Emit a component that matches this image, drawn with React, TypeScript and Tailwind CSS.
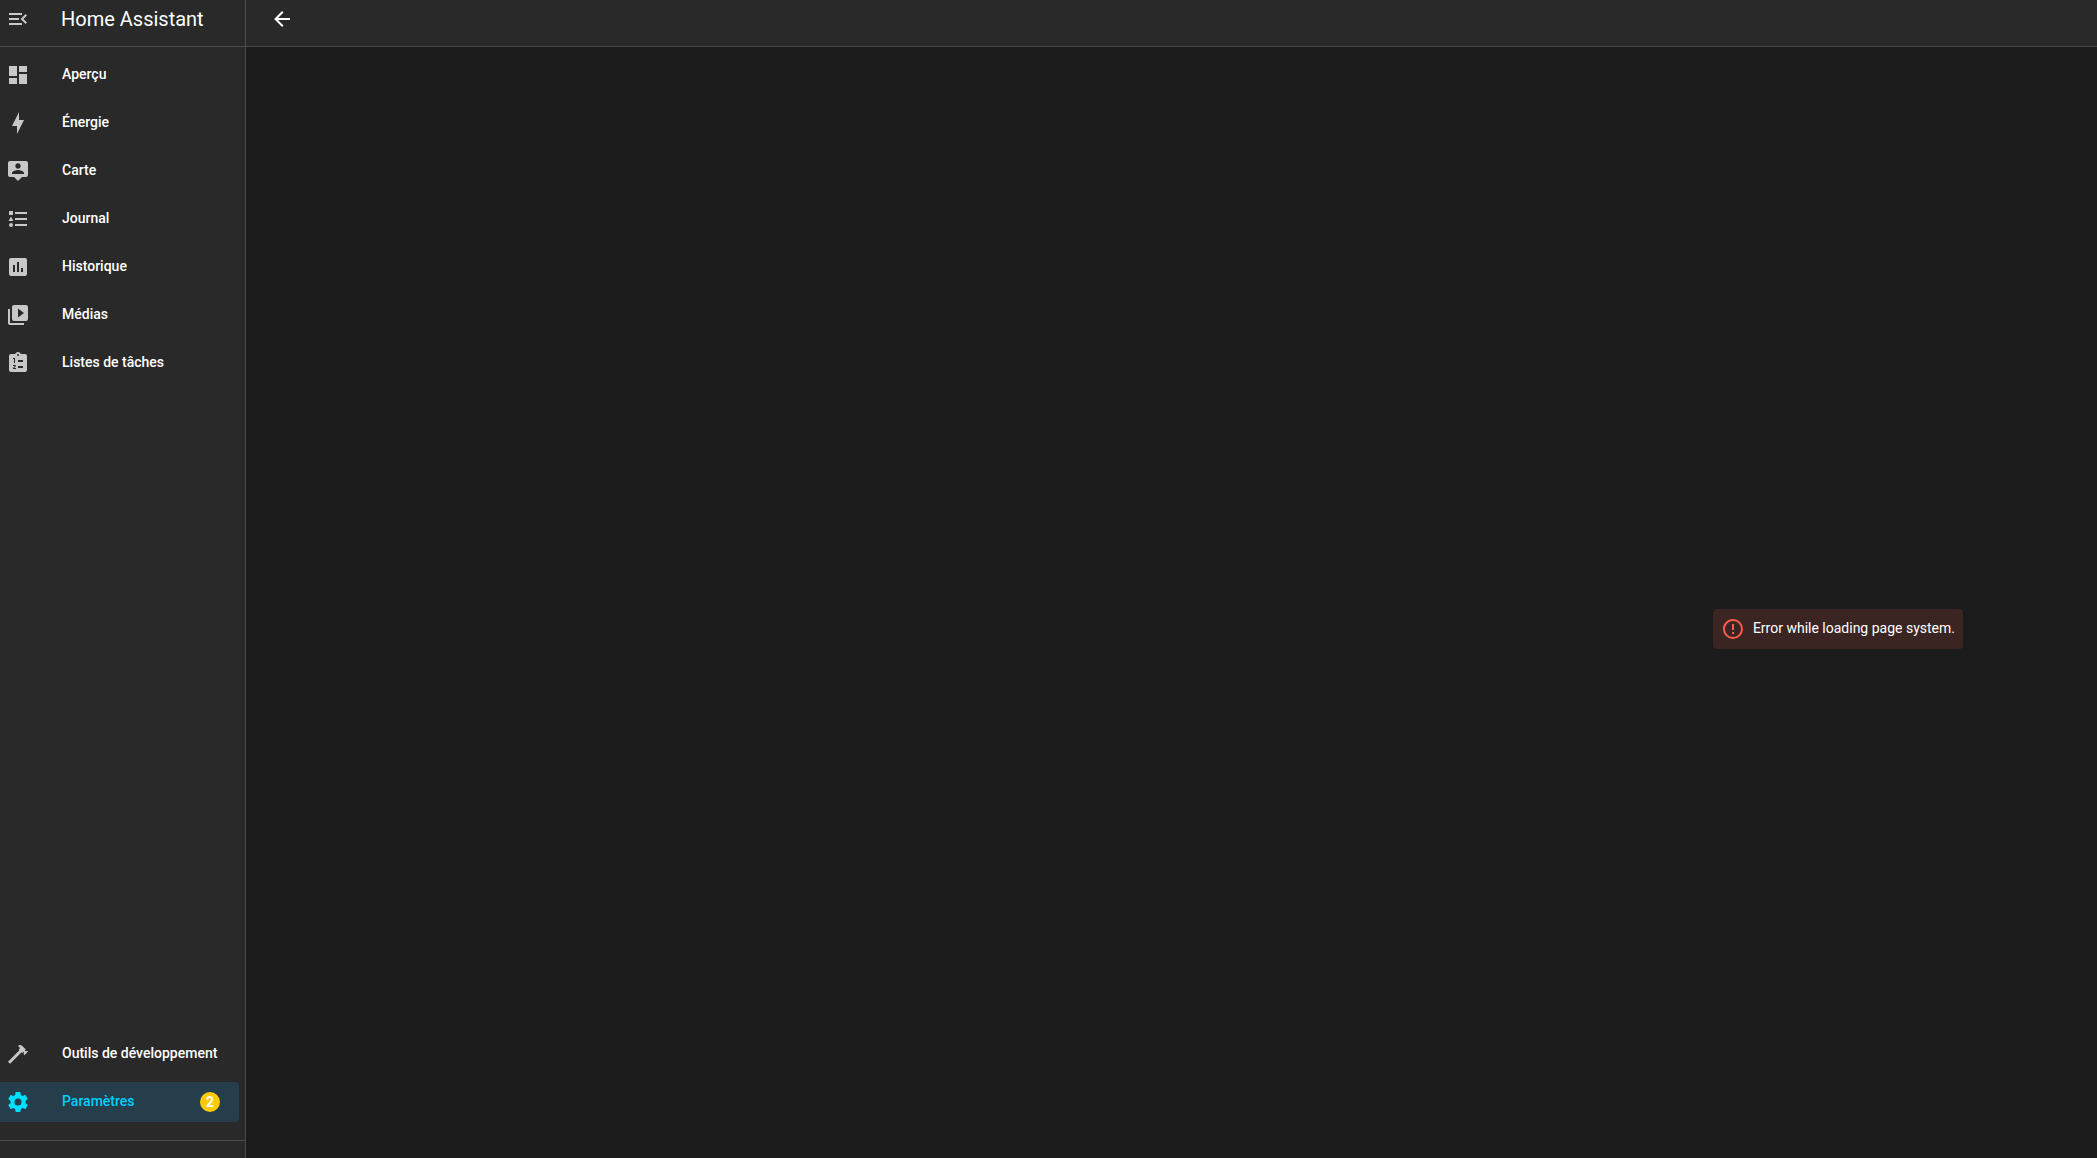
import React, { useState } from 'react';

// Material Design icon outlines, all on a 24 x 24 grid
const ICONS = {
  menuOpen: 'M21,15.61L19.59,17L14.58,12L19.59,7L21,8.39L17.44,12L21,15.61M3,6H16V8H3V6M3,13V11H13V13H3M3,18V16H16V18H3Z',
  arrowLeft: 'M20,11V13H8L13.5,18.5L12.08,19.92L4.16,12L12.08,4.08L13.5,5.5L8,11H20Z',
  dashboard: 'M13,3V9H21V3M13,21H21V11H13M3,21H11V15H3M3,13H11V3H3V13Z',
  lightning: 'M11 15H6L13 1V9H18L11 23V15Z',
  account: 'M20,2H4A2,2 0 0,0 2,4V16A2,2 0 0,0 4,18H8L12,22L16,18H20A2,2 0 0,0 22,16V4A2,2 0 0,0 20,2M12,4.3C13.5,4.3 14.7,5.5 14.7,7C14.7,8.5 13.5,9.7 12,9.7C10.5,9.7 9.3,8.5 9.3,7C9.3,5.5 10.5,4.3 12,4.3M18,15H6V14.1C6,12.1 10,11 12,11C14,11 18,12.1 18,14.1V15Z',
  list: 'M5,9.5L7.5,14H2.5L5,9.5M3,4H7V8H3V4M5,20A2,2 0 0,0 7,18A2,2 0 0,0 5,16A2,2 0 0,0 3,18A2,2 0 0,0 5,20M9,5V7H21V5H9M9,19H21V17H9V19M9,13H21V11H9V13Z',
  chart: 'M19,3H5A2,2 0 0,0 3,5V19A2,2 0 0,0 5,21H19A2,2 0 0,0 21,19V5A2,2 0 0,0 19,3M9,17H7V10H9V17M13,17H11V7H13V17M17,17H15V13H17V17Z',
  media: 'M4,6H2V20A2,2 0 0,0 4,22H18V20H4V6M20,2H8A2,2 0 0,0 6,4V16A2,2 0 0,0 8,18H20A2,2 0 0,0 22,16V4A2,2 0 0,0 20,2M12,14.5V5.5L18,10L12,14.5Z',
  clipboard: 'M19,3H14.82C14.4,1.84 13.3,1 12,1C10.7,1 9.6,1.84 9.18,3H5A2,2 0 0,0 3,5V19A2,2 0 0,0 5,21H19A2,2 0 0,0 21,19V5A2,2 0 0,0 19,3M12,3A1,1 0 0,1 13,4A1,1 0 0,1 12,5A1,1 0 0,1 11,4A1,1 0 0,1 12,3M7,7H9V12H8V8H7V7M10,17V18H7V17.08L9,15H7V14H9.25A0.75,0.75 0 0,1 10,14.75C10,14.95 9.92,15.14 9.79,15.27L8.12,17H10M17,17H12V15H17V17M17,11H12V9H17V11Z',
  hammer: 'M2 19.63L13.43 8.2L12.72 7.5L14.14 6.07L12 3.89C13.2 2.7 15.09 2.7 16.27 3.89L19.87 7.5L18.45 8.91H21.29L22 9.62L18.45 13.21L17.74 12.5V9.62L16.27 11.04L15.56 10.33L4.13 21.76L2 19.63Z',
  cog: 'M12,15.5A3.5,3.5 0 0,1 8.5,12A3.5,3.5 0 0,1 12,8.5A3.5,3.5 0 0,1 15.5,12A3.5,3.5 0 0,1 12,15.5M19.43,12.97C19.47,12.65 19.5,12.33 19.5,12C19.5,11.67 19.47,11.34 19.43,11L21.54,9.37C21.73,9.22 21.78,8.95 21.66,8.73L19.66,5.27C19.54,5.05 19.27,4.96 19.05,5.05L16.56,6.05C16.04,5.66 15.5,5.32 14.87,5.07L14.5,2.42C14.46,2.18 14.25,2 14,2H10C9.75,2 9.54,2.18 9.5,2.42L9.13,5.07C8.5,5.32 7.96,5.66 7.44,6.05L4.95,5.05C4.73,4.96 4.46,5.05 4.34,5.27L2.34,8.73C2.21,8.95 2.27,9.22 2.46,9.37L4.57,11C4.53,11.34 4.5,11.67 4.5,12C4.5,12.33 4.53,12.65 4.57,12.97L2.46,14.63C2.27,14.78 2.21,15.05 2.34,15.27L4.34,18.73C4.46,18.95 4.73,19.03 4.95,18.95L7.44,17.94C7.96,18.34 8.5,18.68 9.13,18.93L9.5,21.58C9.54,21.82 9.75,22 10,22H14C14.25,22 14.46,21.82 14.5,21.58L14.87,18.93C15.5,18.67 16.04,18.34 16.56,17.94L19.05,18.95C19.27,19.03 19.54,18.95 19.66,18.73L21.66,15.27C21.78,15.05 21.73,14.78 21.54,14.63L19.43,12.97Z',
  alert: 'M11,15H13V17H11V15M11,7H13V13H11V7M12,2C6.47,2 2,6.5 2,12A10,10 0 0,0 12,22A10,10 0 0,0 22,12A10,10 0 0,0 12,2M12,20A8,8 0 0,1 4,12A8,8 0 0,1 12,4A8,8 0 0,1 20,12A8,8 0 0,1 12,20Z',
};

type IconName = keyof typeof ICONS;

interface NavItem {
  id: string;
  label: string;
  icon: IconName;
  badge?: number;
}

const MAIN_ITEMS: NavItem[] = [
  { id: 'overview', label: 'Aperçu', icon: 'dashboard' },
  { id: 'energy', label: 'Énergie', icon: 'lightning' },
  { id: 'map', label: 'Carte', icon: 'account' },
  { id: 'logbook', label: 'Journal', icon: 'list' },
  { id: 'history', label: 'Historique', icon: 'chart' },
  { id: 'media', label: 'Médias', icon: 'media' },
  { id: 'todo', label: 'Listes de tâches', icon: 'clipboard' },
];

const BOTTOM_ITEMS: NavItem[] = [
  { id: 'developer-tools', label: 'Outils de développement', icon: 'hammer' },
  { id: 'config', label: 'Paramètres', icon: 'cog', badge: 2 },
];

const Icon: React.FC<{ name: IconName }> = ({ name }) => (
  <svg viewBox="0 0 24 24" className="size-6 shrink-0 fill-current" aria-hidden="true">
    <path d={ICONS[name]} fillRule="evenodd" />
  </svg>
);

interface NavListProps {
  items: NavItem[];
  active: string;
  onSelect: (id: string) => void;
}

const NavList: React.FC<NavListProps> = ({ items, active, onSelect }) => (
  <ul className="flex flex-col gap-2 pr-1.5">
    {items.map((item) => {
      const selected = item.id === active;
      return (
        <li key={item.id}>
          <a
            href={`#${item.id}`}
            onClick={() => onSelect(item.id)}
            aria-current={selected ? 'page' : undefined}
            className={`flex h-10 items-center rounded-r pl-1.5 pr-[19px] text-sm font-medium ${
              selected ? 'bg-[#263e4b] text-[#00cfff]' : 'text-white'
            }`}
          >
            <span className={`mr-8 ${selected ? 'text-[#00dfff]' : 'text-[#c8c8c8]'}`}>
              <Icon name={item.icon} />
            </span>
            <span className="grow whitespace-nowrap pb-0.5">{item.label}</span>
            {item.badge && (
              <span className="flex size-5 items-center justify-center rounded-full bg-[#ffca00] font-bold text-white">
                {item.badge}
              </span>
            )}
          </a>
        </li>
      );
    })}
  </ul>
);

const App: React.FC = () => {
  const [active, setActive] = useState('config');

  return (
    <div className="flex min-h-screen bg-[#1b1b1b] font-[Roboto,sans-serif] text-white">
      <aside className="flex w-[246px] shrink-0 flex-col border-r border-[#4b4b4b] bg-[#292929]">
        <div className="flex h-[47px] items-center border-b border-[#4b4b4b] pb-2 pl-1.5">
          <button type="button" aria-label="Menu" className="mr-[31px] text-[#c8c8c8]">
            <Icon name="menuOpen" />
          </button>
          <h1 className="text-xl">Home Assistant</h1>
        </div>
        <nav className="flex grow flex-col justify-between pb-[18px] pt-2">
          <NavList items={MAIN_ITEMS} active={active} onSelect={setActive} />
          <NavList items={BOTTOM_ITEMS} active={active} onSelect={setActive} />
        </nav>
        <div className="h-[18px] border-t border-[#4b4b4b]" />
      </aside>

      <div className="flex grow flex-col">
        <header className="flex h-[47px] items-center border-b border-[#4b4b4b] bg-[#292929] pb-2 pl-6">
          <button type="button" aria-label="Retour">
            <Icon name="arrowLeft" />
          </button>
        </header>
        <main className="flex grow items-center justify-end pr-[134px] pt-[52px]">
          <div role="alert" className="flex h-10 items-center gap-2 rounded bg-[#3b2523] px-2 text-sm">
            <span className="text-[#ff5c4d]">
              <Icon name="alert" />
            </span>
            <p className="pb-0.5">Error while loading page system.</p>
          </div>
        </main>
      </div>
    </div>
  );
};

export default App;
